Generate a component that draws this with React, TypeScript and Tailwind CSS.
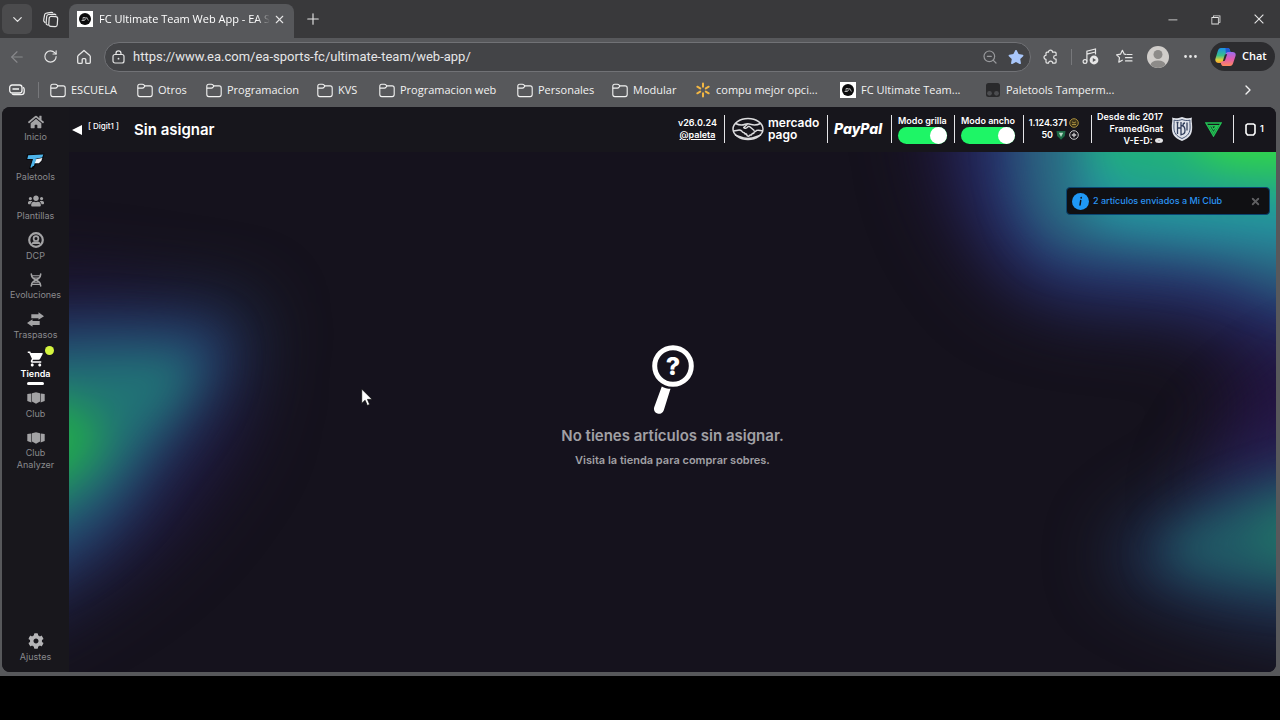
import { useState, type ReactNode } from "react";
import {
  ArrowLeft,
  ChevronDown,
  ChevronRight,
  Ellipsis,
  Plus,
  RotateCw,
  X,
  ZoomOut,
} from "lucide-react";
import { FaHome, FaUsers, FaCog, FaStar } from "react-icons/fa";
import { MdShoppingCart } from "react-icons/md";
import {
  VscChromeClose,
  VscChromeMinimize,
  VscChromeRestore,
} from "react-icons/vsc";

/* ---------- icons ---------- */

const TabStackIcon = () => (
  <svg className="w-[17px] h-[17px]" viewBox="0 0 17 17" fill="none" stroke="currentColor" strokeWidth="1.2">
    <rect x="7" y="5.5" width="8.5" height="10" rx="2" transform="rotate(4 11 10)" />
    <path d="M6.4 14.2 5.6 14c-1-.2-1.6-.9-1.5-1.9l.6-6.6c.1-1.2.9-1.900 1.900-2l6-.3c.8 0 1.300.4 1.500 1.100" />
    <path d="M3.300 11.800 2.500 11c-.7-.6-1-1.300-.8-2.100l.9-5c.2-1 .8-1.600 1.800-1.700l4.900-.8c.7-.1 1.300.1 1.600.7" />
  </svg>
);

const HomeIcon = () => (
  <svg className="w-4 h-4" viewBox="0 0 16 16" fill="none" stroke="currentColor" strokeWidth="1.3" strokeLinejoin="round">
    <path d="M8 1.500 2.200 6.600c-.3.300-.5.600-.5 1V13.300c0 .6.400 1 1 1h2.600c.5 0 .9-.4.9-.9V10.500c0-.5.400-.9.900-.9h1.800c.5 0 .9.400.9.900v2.900c0 .5.400.9.900.9h2.600c.6 0 1-.4 1-1V7.600c0-.4-.2-.7-.5-1Z" />
  </svg>
);

const LockIcon = () => (
  <svg className="w-[13px] h-[14px] shrink-0" viewBox="0 0 13 14" fill="none" stroke="currentColor" strokeWidth="1.2">
    <rect x="1" y="4.5" width="11" height="8.5" rx="2" />
    <path d="M4 4.500V3.400a2.500 2.500 0 0 1 5 0v1.100" />
    <circle cx="6.5" cy="8.7" r="0.9" fill="currentColor" stroke="none" />
  </svg>
);

const FolderIcon = () => (
  <svg className="w-4 h-[15px] shrink-0" viewBox="0 0 16 15" fill="none" stroke="currentColor" strokeWidth="1.1">
    <path d="M.8 3.300C.8 2 1.600 1.300 2.800 1.300h2.700c.6 0 1 .2 1.400.6l1 1h5.300c1.200 0 2 .8 2 2v6.700c0 1.200-.8 2-2 2H2.800c-1.200 0-2-.8-2-2Z" />
    <path d="M.8 5.100h4.700c.6 0 1-.2 1.400-.6l1-1.600" />
  </svg>
);

const PuzzleIcon = () => (
  <svg className="w-4 h-4" viewBox="0 0 16 16" fill="none" stroke="currentColor" strokeWidth="1.2" strokeLinejoin="round">
    <path d="M5.500 3.200a2 2 0 0 1 4 0h2.600c.6 0 1 .4 1 1v2.300h-.6a1.800 1.800 0 0 0 0 3.700h.6v2.900c0 .6-.4 1-1 1H9.600a2 2 0 0 0-4 0H4c-.6 0-1-.4-1-1v-2.800a2 2 0 0 1 0-4V4.200c0-.6.400-1 1-1Z" />
  </svg>
);

const MusicIcon = () => (
  <svg className="w-[17px] h-[17px]" viewBox="0 0 17 17" fill="none" stroke="currentColor" strokeWidth="1.2">
    <circle cx="3" cy="13.5" r="1.9" />
    <path d="M4.900 13.500V3.200L13.500 1v5.500M4.900 6.200l8.600-2.200" />
    <circle cx="12" cy="12" r="4.4" fill="currentColor" stroke="none" />
    <path d="m10.800 9.900 3.300 2.100-3.300 2.100Z" fill="#57585b" stroke="none" />
  </svg>
);

const FavoritesIcon = () => (
  <svg className="w-[17px] h-4" viewBox="0 0 17 16" fill="none" stroke="currentColor" strokeWidth="1.2" strokeLinejoin="round" strokeLinecap="round">
    <path d="m9.800 5.400-1.500-.2L6.400 1.300 4.500 5.200l-3.900.6 2.900 2.900-.7 4.400 3.500-1.900" />
    <path d="M11 5.500h5M9.500 8.700H16M9.500 11.900H16" />
  </svg>
);

const CopilotIcon = () => (
  <svg className="w-[21px] h-5" viewBox="0 0 21 20">
    <defs>
      <linearGradient id="copLeft" x1="0" y1="0" x2="0" y2="1">
        <stop offset="0" stopColor="#1b8fe8" />
        <stop offset="0.5" stopColor="#39c08c" />
        <stop offset="0.8" stopColor="#e3d23a" />
        <stop offset="1" stopColor="#f49a2c" />
      </linearGradient>
      <linearGradient id="copRight" x1="0" y1="0" x2="0" y2="1">
        <stop offset="0" stopColor="#9a6cf0" />
        <stop offset="0.5" stopColor="#e05bb0" />
        <stop offset="1" stopColor="#ff8a5c" />
      </linearGradient>
    </defs>
    <path d="M6 1h6.500c1.200 0 2 .7 2.300 1.800L15.500 5c-2 0-3 .7-3.600 2.500L10 14c-.5 1.300-1.300 2-2.800 2H3.500C1 16-.2 14 .5 11.500L2.800 4C3.400 2 4.400 1 6 1Z" fill="url(#copLeft)" />
    <path d="M10.500 1h2c1.200 0 2 .7 2.300 1.800L15.500 5c-2 0-3 .7-3.600 2.500L11 10Z" fill="#2257d6" />
    <path d="M15 19H8.500c-1.200 0-2-.7-2.300-1.800L5.500 15c2 0 3-.7 3.600-2.500L11 6.500c.5-1 1.300-1.500 2.800-1.500h3.700c2.500 0 3.700 1.500 3 4l-2.300 7c-.6 2-1.600 3-3.200 3Z" fill="url(#copRight)" />
    <path d="m9.900 7.500 2.300-.5-2.300 6.800-2.100.4Z" fill="#2c2c2f" />
  </svg>
);

const EaIcon = () => (
  <svg className="w-4 h-4 shrink-0" viewBox="0 0 16 16">
    <rect width="16" height="16" fill="#fff" />
    <circle cx="8" cy="8" r="6" fill="#0b0b0c" />
    <path d="M5.800 6.500h2.800M5.200 8h2.400M4.600 9.500h2.800l2.300-3 1.700 3" stroke="#d8d8d8" strokeWidth="0.8" fill="none" />
  </svg>
);

const SparkIcon = () => (
  <svg className="w-4 h-4 shrink-0" viewBox="0 0 16 16" stroke="#f3b743" strokeWidth="2" strokeLinecap="round">
    <path d="M8 1.500v3.300M8 11.200v3.300M2.300 4.700l2.900 1.700M10.800 9.600l2.900 1.700M2.300 11.300l2.900-1.700M10.800 6.400l2.900-1.700" />
  </svg>
);

const TamperIcon = () => (
  <svg className="w-4 h-4 shrink-0" viewBox="0 0 16 16">
    <rect x="1" y="1" width="14" height="14" rx="2.5" fill="#29292b" />
    <circle cx="4.5" cy="11.3" r="2.4" fill="#4c4d50" />
    <circle cx="11.5" cy="11.3" r="2.4" fill="#4c4d50" />
  </svg>
);

const PaletoolsIcon = () => (
  <svg className="w-[19px] h-[17px]" viewBox="0 0 19 17">
    <path d="M1 1.200 18.500.5 17 6.500l-3.500 4.300-3.500.7L7.500 16H3L5.800 7H.3Z" fill="#08090c" />
    <path d="M2.200 2.300 17.300 1.600 16.200 4.600 9 5.800 5.800 14.500H4.300L7 6H1.300Z" fill="#4db4ea" />
    <path d="m9.800 6.300 6.500-1.400-.9 2.800-2.500 2.500H8.600Z" fill="#f4f7fa" />
    <path d="m7.600 5.700 2.900-.4-2.400 7-3 2.200Z" fill="#4db4ea" />
  </svg>
);

const DcpIcon = () => (
  <svg className="w-4 h-4" viewBox="0 0 16 16">
    <circle cx="8" cy="8" r="6.8" fill="none" stroke="currentColor" strokeWidth="2.2" />
    <circle cx="8" cy="6.6" r="2.4" fill="none" stroke="currentColor" strokeWidth="1.7" />
    <path d="M3.600 12c.3-1.900 1.500-2.800 2.700-2.800.9.500 2.500.5 3.400 0 1.200 0 2.400.9 2.700 2.800Z" fill="currentColor" />
  </svg>
);

const DnaIcon = () => (
  <svg className="w-3 h-[14px]" viewBox="0 0 12 14" fill="none" stroke="currentColor" strokeWidth="1.6" strokeLinecap="round">
    <path d="M1.300 1c0 2 .7 3.300 2 4.300L8.700 8.700c1.300 1 2 2.300 2 4.300" />
    <path d="M10.700 1c0 2-.7 3.300-2 4.300L3.300 8.700C2 9.700 1.300 11 1.300 13" />
    <path d="M2.500 2.700h7M4 5h4M4 9.200h4M2.500 11.400h7" strokeWidth="1.1" />
  </svg>
);

const TransferIcon = () => (
  <svg className="w-[17px] h-[15px]" viewBox="0 0 17 15" fill="currentColor">
    <path d="M11.500.3 17 4.300l-5.500 3.500V6.300H4.300V2.200h7.200Z" />
    <path d="M5.500 7.200 0 10.900l5.500 3.800v-1.600h7.200V9H5.500Z" />
  </svg>
);

const ClubIcon = () => (
  <svg className="w-[18px] h-3" viewBox="0 0 18 12" fill="currentColor">
    <path d="M5 1.200 9 .3l4 .9v8.200l-4 2.400-4-2.400Z" />
    <path d="M.3 1.900 4.400 1.400v9L.3 9Z" />
    <path d="m17.700 1.900-4.100-.5v9l4.100-1.400Z" />
  </svg>
);

const HandshakeLogo = () => (
  <svg className="w-8 h-6 shrink-0" viewBox="0 0 32 24" fill="none" stroke="#dcdcde" strokeWidth="1.5" strokeLinejoin="round">
    <ellipse cx="16" cy="12" rx="15" ry="10.5" />
    <path d="M3.500 6.500c3.500 1.700 6.500 2 9.500.7 2-.8 3.500-.8 5.500 0 3.500 1.300 6.500 1 10-.7" />
    <path d="M1.500 14c4-.5 6-1.800 7.800-.3 1 .7 1 1.700 2 1.700 1.200 0 1.500.6 1.800 1.500 1.300-.2 1.800.5 2 1.700 1.300 1 2.600.5 2.900-.7 1.300.3 2-.2 2.200-1.400 1.300 0 2-.5 2-1.600 1.500-.2 1.700-1 2.500-1.500 2-.6 4 0 5.800.4" />
    <path d="m15.500 7.200-3.800 3.300c.8 1.500 3 .8 4.300-.9l1.500-.1 5 4.200" />
    <path d="M3 18c5 1.500 7 3.500 13 3.500S24 19.500 29 18" />
  </svg>
);

const CrestIcon = () => (
  <svg className="w-[22px] h-[26px] shrink-0" viewBox="0 0 22 26">
    <path d="M1 1.500c3 1.300 6 .9 10-.5 4 1.400 7 1.800 10 .5-.8 3 .2 5 .2 9.500 0 7-2.200 11-10.200 14C3 22 .8 18 .8 11c0-4.500 1-6.500.2-9.500Z" fill="#dfe2e9" />
    <path d="M3 4.200c3 .7 5.500.3 8-.7 2.500 1 5 1.400 8 .7-.3 2.300.1 4 .1 6.800 0 5.800-2 9-8.100 11.500C5 20 2.900 16.800 2.900 11c0-2.800.4-4.500.1-6.800Z" fill="none" stroke="#4a5876" strokeWidth="1" />
    <path d="M6.500 6v12M5.500 6.500h2M10 6v7M6.500 12H10M10 9.500v10M10 9.500c3 0 4 2 4 5s-1 4-4 4M16 6.500v8M14 7c-1.500 0-2 1-2 2.500" fill="none" stroke="#33405d" strokeWidth="1.3" />
  </svg>
);

const DivisionIcon = () => (
  <svg className="w-[17px] h-[15px] shrink-0" viewBox="0 0 17 15" fill="none" stroke="#22c254" strokeWidth="1.4">
    <path d="M1 1h15L8.500 14Z" />
    <path d="M4 3.700h9L8.500 11.200ZM6.500 4l2 3.500 3-3.500" />
  </svg>
);

const CoinIcon = () => (
  <svg className="w-2.5 h-2.5" viewBox="0 0 10 10" fill="none" stroke="#a98f3f">
    <circle cx="5" cy="5" r="4.3" fill="#3b3218" />
    <path d="M3 3.800 5 5l2-1.200M3 6.500h4" />
  </svg>
);

const PointsIcon = () => (
  <svg className="w-2.5 h-2.5" viewBox="0 0 10 10">
    <path d="M.5 1h9l-.7 5L5 9.800 1.200 6Z" fill="#1d6b46" />
    <path d="M2.800 2.800h4.400L5 7Z" fill="#b6d9c6" />
  </svg>
);

const AddIcon = () => (
  <svg className="w-2.5 h-2.5" viewBox="0 0 10 10" fill="none" stroke="#c9c9cc">
    <circle cx="5" cy="5" r="4.3" />
    <path d="M5 2.800v4.400M2.800 5h4.400" strokeWidth="1.3" />
  </svg>
);

const SearchEmptyIcon = () => (
  <svg className="w-[42px] h-[69px]" viewBox="0 0 42 69" fill="none">
    <circle cx="21" cy="21" r="18.3" stroke="#fff" strokeWidth="5" />
    <path d="M9.800 41.500c2.600 1.500 5.600 2.300 8.700 2.300L11.800 65.300a5 5 0 0 1-9.600-3Z" fill="#fff" />
    <text x="21" y="30" textAnchor="middle" fill="#fff" className="text-[25px] font-extrabold font-['Inter',sans-serif]">
      ?
    </text>
  </svg>
);

/* Soft aurora glow behind the content area */
const Backdrop = () => (
  <svg className="absolute inset-0 w-full h-full" viewBox="0 0 1207 520" preserveAspectRatio="none" aria-hidden="true">
    <defs>
      <filter id="soft" filterUnits="userSpaceOnUse" x="-300" y="-300" width="1800" height="1100" colorInterpolationFilters="sRGB">
        <feGaussianBlur stdDeviation="22" />
      </filter>
      <filter id="wide" filterUnits="userSpaceOnUse" x="-300" y="-300" width="1800" height="1100" colorInterpolationFilters="sRGB">
        <feGaussianBlur stdDeviation="34" />
      </filter>
    </defs>
    <rect width="1207" height="520" fill="#15121d" />
    {/* left */}
    <g filter="url(#wide)">
      <path d="M-100 125C20 120 100 140 150 150 190 200 190 270 150 320 110 380 60 440-100 500Z" fill="#24164a" opacity="0.7" />
      <path d="M-100 175C20 165 120 140 180 150 210 190 170 240 110 310 70 370 40 440-100 490Z" fill="#233f66" opacity="0.6" />
    </g>
    <g filter="url(#soft)">
      <path d="M-100 175C20 170 90 170 145 182 160 215 130 250 85 310 60 350 30 420-100 440Z" fill="#274b7a" opacity="0.7" />
      <path d="M-100 210C20 205 80 195 125 208 130 230 105 255 75 290 45 330 20 385-100 395Z" fill="#217f78" opacity="0.8" />
      <path d="M-100 245C0 245 20 255 32 272 30 310 15 340-100 355Z" fill="#22ab4c" />
    </g>
    {/* top right */}
    <g filter="url(#wide)">
      <path d="M860-100C845 10 870 70 930 135 1010 185 1090 150 1140 190 1190 230 1170 290 1120 350L1300 380V-100Z" fill="#231447" opacity="0.7" />
      <path d="M910-100C885 10 910 90 970 135 1040 160 1120 140 1180 170L1320 220V-100Z" fill="#293d7c" opacity="0.9" />
    </g>
    <g filter="url(#soft)">
      <path d="M965-100C940 0 945 65 985 95 1060 115 1140 100 1207 140L1320 165V-100Z" fill="#2d7f86" opacity="0.65" />
      <path d="M1025-100C1000-10 1000 50 1030 75 1100 90 1150 85 1320 110V-100Z" fill="#2598a6" opacity="0.9" />
      <path d="M1030-100C1010-20 1015 15 1050 30 1110 40 1150 42 1320 55V-100Z" fill="#20b07c" />
      <path d="M1110-100 1125-5 1160 14 1320 20V-100Z" fill="#34d944" />
    </g>
    {/* bottom right */}
    <g filter="url(#wide)">
      <path d="M1320 190C1230 210 1170 260 1140 310 1160 350 1240 360 1320 360Z" fill="#2b1752" opacity="0.55" />
      <path d="M1320 290C1200 305 1100 335 1040 405 1070 450 1190 480 1320 490Z" fill="#25406c" opacity="0.75" />
    </g>
    <g filter="url(#soft)">
      <path d="M1320 310C1200 330 1130 355 1090 400 1110 430 1200 438 1320 438Z" fill="#21706f" opacity="0.65" />
      <path d="M1320 325C1230 340 1190 365 1180 390 1190 412 1250 415 1320 415Z" fill="#217f66" opacity="0.7" />
    </g>
  </svg>
);

/* ---------- data ---------- */

const bookmarks = [
  { label: "ESCUELA", icon: FolderIcon, width: "w-[87px]" },
  { label: "Otros", icon: FolderIcon, width: "w-[69px]" },
  { label: "Programacion", icon: FolderIcon, width: "w-[111px]" },
  { label: "KVS", icon: FolderIcon, width: "w-[62px]" },
  { label: "Programacion web", icon: FolderIcon, width: "w-[138px]" },
  { label: "Personales", icon: FolderIcon, width: "w-[95px]" },
  { label: "Modular", icon: FolderIcon, width: "w-[83px]" },
  { label: "compu mejor opci...", icon: SparkIcon, width: "w-[145px]" },
  { label: "FC Ultimate Team...", icon: EaIcon, width: "w-[145px]" },
  { label: "Paletools Tamperm...", icon: TamperIcon, width: "w-[145px]" },
];

const navItems = [
  { id: "inicio", label: "Inicio", icon: <FaHome className="w-4 h-4" /> },
  { id: "paletools", label: "Paletools", icon: <PaletoolsIcon /> },
  { id: "plantillas", label: "Plantillas", icon: <FaUsers className="w-4 h-4" /> },
  { id: "dcp", label: "DCP", icon: <DcpIcon /> },
  { id: "evoluciones", label: "Evoluciones", icon: <DnaIcon /> },
  { id: "traspasos", label: "Traspasos", icon: <TransferIcon /> },
  { id: "tienda", label: "Tienda", icon: <MdShoppingCart className="w-[18px] h-[18px]" /> },
  { id: "club", label: "Club", icon: <ClubIcon /> },
  { id: "analyzer", label: "Club Analyzer", icon: <ClubIcon /> },
];

/* ---------- browser chrome ---------- */

function IconButton({ label, children, className = "w-[33px]" }: { label: string; children: ReactNode; className?: string }) {
  return (
    <button aria-label={label} className={`${className} h-full shrink-0 flex items-center justify-center`}>
      {children}
    </button>
  );
}

function TitleBar() {
  return (
    <div className="h-[38px] flex bg-[#39393b] text-[#e6e6e6]">
      <div className="w-[69px] flex items-center pl-0.5">
        <button aria-label="Buscar pestañas" className="w-[30px] h-[30px] rounded-md bg-[#4b4b4d] flex items-center justify-center">
          <ChevronDown size={15} strokeWidth={2} />
        </button>
        <IconButton label="Espacios de trabajo" className="w-[37px]">
          <TabStackIcon />
        </IconButton>
      </div>
      <div className="w-[225px] mt-1 pb-1 px-2 flex items-center rounded-t-lg bg-[#57585b]">
        <EaIcon />
        <span className="ml-1.5 w-[171px] shrink-0 overflow-hidden whitespace-nowrap text-[11px] font-medium text-white mask-r-from-92%">
          FC Ultimate Team Web App - EA SP
        </span>
        <button aria-label="Cerrar pestaña" className="ml-[3px]">
          <X size={13} strokeWidth={2} />
        </button>
      </div>
      <IconButton label="Nueva pestaña" className="w-[38px]">
        <Plus size={18} strokeWidth={1.5} />
      </IconButton>
      <div className="ml-auto flex">
        <IconButton label="Minimizar" className="w-[43px]">
          <VscChromeMinimize size={13} />
        </IconButton>
        <IconButton label="Restaurar" className="w-[43px]">
          <VscChromeRestore size={13} />
        </IconButton>
        <IconButton label="Cerrar" className="w-[43px]">
          <VscChromeClose size={14} />
        </IconButton>
      </div>
    </div>
  );
}

function Toolbar() {
  const [url, setUrl] = useState("https://www.ea.com/ea-sports-fc/ultimate-team/web-app/");

  return (
    <div className="h-[37px] flex items-center pl-0.5 pr-[5px] text-[#e6e6e6]">
      <IconButton label="Atrás" className="w-[30px]">
        <ArrowLeft size={18} strokeWidth={1.5} className="text-[#88898c]" />
      </IconButton>
      <IconButton label="Actualizar" className="w-9">
        <RotateCw size={15} strokeWidth={1.8} />
      </IconButton>
      <IconButton label="Inicio" className="w-8">
        <HomeIcon />
      </IconButton>
      <div className="ml-1 h-[30px] flex-1 min-w-0 pl-[7px] pr-1.5 flex items-center rounded-full border border-[#717276] bg-[#434447]">
        <LockIcon />
        <input
          aria-label="Dirección"
          value={url}
          onChange={(e) => setUrl(e.target.value)}
          className="ml-2 flex-1 min-w-0 bg-transparent text-[13px] text-[#e6e6e7] outline-none font-['Roboto','Open_Sans',sans-serif]"
        />
        <button aria-label="Zoom" className="mr-2.5">
          <ZoomOut size={16} strokeWidth={1.8} className="text-[#98999c]" />
        </button>
        <button aria-label="Favorito">
          <FaStar size={16} className="text-[#a9c7fb]" />
        </button>
      </div>
      <IconButton label="Extensiones" className="w-10">
        <PuzzleIcon />
      </IconButton>
      <div className="h-4 w-px bg-[#77787b]" />
      <IconButton label="Multimedia" className="w-9">
        <MusicIcon />
      </IconButton>
      <IconButton label="Favoritos">
        <FavoritesIcon />
      </IconButton>
      <IconButton label="Perfil">
        <svg className="w-[22px] h-[22px]" viewBox="0 0 22 22">
          <circle cx="11" cy="11" r="11" fill="#d0cdca" />
          <circle cx="11" cy="8.5" r="4.5" fill="#8d8b89" />
          <path d="M3.500 19c.5-3 3-4.500 7.500-4.500s7 1.500 7.500 4.500a11 11 0 0 1-15 0Z" fill="#8d8b89" />
        </svg>
      </IconButton>
      <IconButton label="Más">
        <Ellipsis size={17} />
      </IconButton>
      <button className="ml-[3px] w-[65px] h-[29px] pl-[5px] flex items-center gap-1.5 rounded-full bg-[#2c2c2f] text-[11px] font-semibold text-white">
        <CopilotIcon />
        Chat
      </button>
    </div>
  );
}

function BookmarksBar() {
  return (
    <div className="h-8 pb-0.5 flex items-center text-[11px] text-[#f2f2f2]">
      <IconButton label="Barra">
        <svg className="w-4 h-3" viewBox="0 0 16 12" fill="none" stroke="currentColor" strokeWidth="1.3">
          <rect x="0.7" y="1" width="12.3" height="8" rx="2.5" />
          <path d="M3.500 5h6.500M14 3.300c.8.400 1.200 1 1.200 1.900v2.600c0 1.600-1 2.900-2.900 2.900H5c-.8 0-1.500-.3-1.900-1" />
        </svg>
      </IconButton>
      <div className="ml-[5px] mr-[11px] h-4 w-px bg-[#77787b]" />
      {bookmarks.map(({ label, icon: Icon, width }) => (
        <a key={label} href="#" className={`${width} shrink-0 flex items-center gap-[5px] whitespace-nowrap`}>
          <Icon />
          {label}
        </a>
      ))}
      <button aria-label="Más favoritos" className="ml-auto mr-6">
        <ChevronRight size={16} strokeWidth={2} />
      </button>
    </div>
  );
}

/* ---------- web app ---------- */

function Sidebar() {
  const [active, setActive] = useState("tienda");

  return (
    <aside className="w-[67px] shrink-0 pt-[5px] pb-[9px] flex flex-col bg-[#18171c] text-[9px] leading-3">
      <nav className="h-[359px] flex flex-col justify-between">
        {navItems.map(({ id, label, icon }) => (
          <button
            key={id}
            onClick={() => setActive(id)}
            className={`relative flex flex-col items-center ${active === id ? "text-white font-semibold" : "text-[#a3a3a5]"}`}
          >
            <span className="h-[19px] flex items-center">{icon}</span>
            <span className={`px-2 text-center ${active === id ? "" : "text-[#8a8a8d]"}`}>{label}</span>
            {active === id && (
              <>
                <span className="absolute -top-[3px] right-[15px] w-[9px] h-[9px] rounded-full bg-[#d5f53f]" />
                <span className="absolute -bottom-[5px] w-[17px] h-[3px] rounded-full bg-white" />
              </>
            )}
          </button>
        ))}
      </nav>
      <button className="mt-auto flex flex-col items-center text-[#8a8a8d]">
        <FaCog className="w-4 h-4 mb-0.5 text-[#b4b4b6]" />
        Ajustes
      </button>
    </aside>
  );
}

function Toggle({ label }: { label: string }) {
  const [on, setOn] = useState(true);

  return (
    <label className="flex flex-col cursor-pointer">
      {label}
      <input type="checkbox" role="switch" checked={on} onChange={() => setOn(!on)} className="peer sr-only" />
      <span className="h-[17px] flex rounded-full bg-[#55555a] peer-checked:bg-[#1ef566] peer-checked:justify-end">
        <span className="w-[17px] h-[17px] rounded-full bg-white" />
      </span>
    </label>
  );
}

function Header() {
  const cell = "h-7 shrink-0 flex items-center border-l border-[#e4e4e7]";

  return (
    <header className="h-[45px] pl-[3px] flex items-center bg-[#17161c] text-white text-[9px] leading-3 font-semibold">
      <button className="flex items-center" aria-label="Volver">
        <svg className="w-2.5 h-2.5" viewBox="0 0 10 10" fill="#fff">
          <path d="M10 0v10L0 5Z" />
        </svg>
        <span className="ml-1.5 mb-2 w-[29px] text-[8px] leading-3 font-medium whitespace-nowrap">[ Digit1 ]</span>
      </button>
      <h1 className="ml-[17px] text-[15px] font-semibold">Sin asignar</h1>

      <div className="ml-auto flex items-center pb-px">
        <div className="w-[49px] pr-1 text-center">
          v26.0.24
          <a href="#" className="block underline">
            @paleta
          </a>
        </div>
        <div className={`${cell} w-[103px] pl-[7px] gap-1`}>
          <HandshakeLogo />
          <div className="text-xs leading-3">
            <span className="block">mercado</span>
            <span className="block">pago</span>
          </div>
        </div>
        <div className={`${cell} w-16 pl-1.5 text-sm font-extrabold italic`}>PayPal</div>
        <div className={`${cell} w-[63px] pl-1.5`}>
          <Toggle label="Modo grilla" />
        </div>
        <div className={`${cell} w-[69px] pl-1.5`}>
          <Toggle label="Modo ancho" />
        </div>
        <div className={`${cell} w-[68px] pl-1.5 pr-3`}>
          <div className="w-full flex flex-col items-end">
            <span className="flex items-center gap-0.5">
              1.124.371 <CoinIcon />
            </span>
            <span className="flex items-center gap-[3px]">
              50 <PointsIcon /> <AddIcon />
            </span>
          </div>
        </div>
        <div className={`${cell} w-[142px] pr-[11px] justify-end`}>
          <div className="text-right whitespace-nowrap">
            Desde dic 2017
            <br />
            FramedGnat
            <br />
            V-E-D:{" "}
            <svg className="inline w-2 h-[5px] mb-0.5" viewBox="0 0 8 5">
              <ellipse cx="4" cy="2.5" rx="4" ry="2.5" fill="#e4e4e6" />
              <circle cx="4" cy="2.5" r="0.8" fill="#a8a8ac" />
            </svg>
          </div>
          <span className="ml-2 mr-3">
            <CrestIcon />
          </span>
          <DivisionIcon />
        </div>
        <div className={`${cell} w-[43px] pl-[11px] gap-1`}>
          <svg className="w-[11px] h-[13px]" viewBox="0 0 11 13" fill="none" stroke="#fff" strokeWidth="1.6">
            <path d="M2.500 1h6L10 2.200V10L8.500 12h-6L1 10V2.200Z" />
          </svg>
          1
        </div>
      </div>
    </header>
  );
}

function Toast({ onClose }: { onClose: () => void }) {
  return (
    <div role="status" className="absolute top-[35px] right-1.5 w-[204px] h-7 px-[5px] flex items-center rounded border border-[#0b4672] bg-[#101013] text-[9px] font-medium text-[#2a94f4]">
      <svg className="w-[17px] h-[17px] shrink-0" viewBox="0 0 17 17">
        <circle cx="8.5" cy="8.5" r="8.5" fill="#1f98f6" />
        <path d="m9.200 4.500-.1.500M8.700 7.600 8 12" stroke="#101013" strokeWidth="1.5" strokeLinecap="round" />
      </svg>
      <span className="ml-1 whitespace-nowrap">2 artículos enviados a Mi Club</span>
      <button aria-label="Cerrar aviso" onClick={onClose} className="ml-auto mr-[3px] text-[#5f5f62]">
        <X size={11} strokeWidth={4} />
      </button>
    </div>
  );
}

export default function App() {
  const [showToast, setShowToast] = useState(true);

  return (
    <div className="min-h-screen pb-11 flex flex-col bg-black">
      <div className="flex-1 flex flex-col bg-[#57585b] font-['Open_Sans','Noto_Sans',sans-serif]">
        <TitleBar />
        <Toolbar />
        <BookmarksBar />

        <div className="flex-1 ml-0.5 mr-1 mb-1 flex rounded-lg overflow-hidden bg-[#17161c] font-['Inter',sans-serif]">
          <Sidebar />
          <div className="flex-1 min-w-0 flex flex-col">
            <Header />
            <main className="relative flex-1 flex">
              <Backdrop />
              <section className="relative flex-1 pb-2 flex flex-col items-center justify-center text-center text-[#a1a0a5]">
                <SearchEmptyIcon />
                <h2 className="mt-2.5 text-[15px] leading-6 font-semibold">No tienes artículos sin asignar.</h2>
                <p className="text-[11px] leading-6 font-semibold">Visita la tienda para comprar sobres.</p>
              </section>
              {showToast && <Toast onClose={() => setShowToast(false)} />}
              {/* pointer */}
              <svg className="absolute left-[292px] top-[236px] w-3 h-[19px]" viewBox="0 0 12 19">
                <path d="M.7 1v14.500l3.400-3.200 2.200 5.200 2.400-1-2.200-5.100h4.700Z" fill="#fff" stroke="#111" strokeWidth="0.8" />
              </svg>
            </main>
          </div>
        </div>
      </div>
    </div>
  );
}
